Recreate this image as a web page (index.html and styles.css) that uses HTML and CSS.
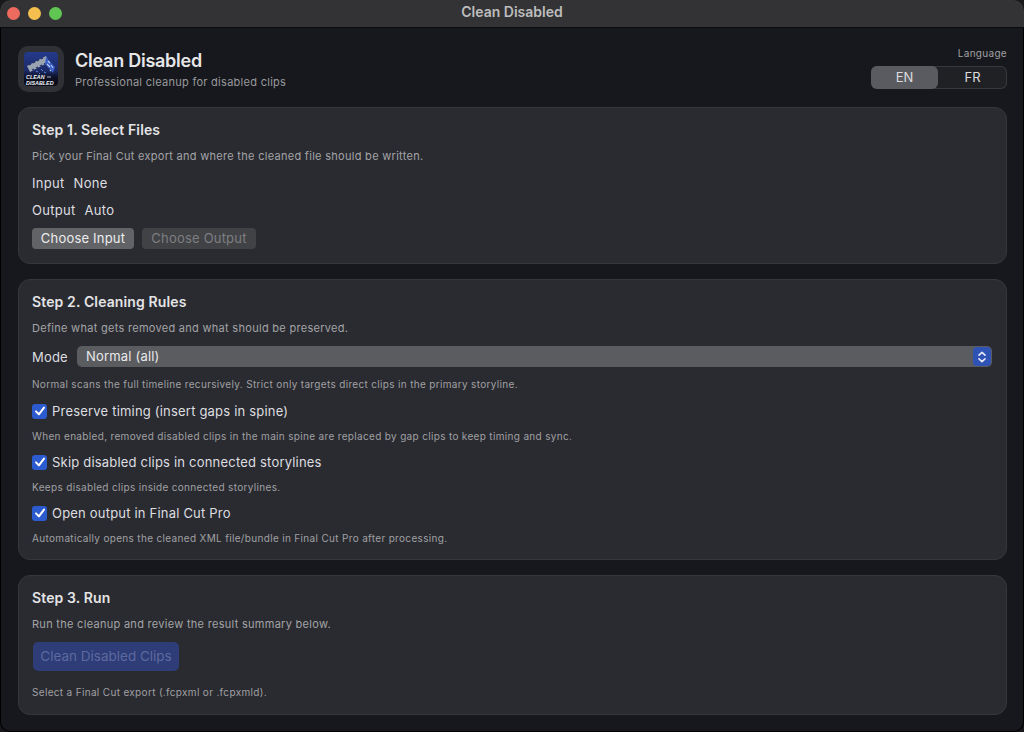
FILE: index.html
```html
<!DOCTYPE html>
<html lang="en">
<head>
<meta charset="utf-8">
<title>Clean Disabled</title>
<link rel="stylesheet" href="styles.css">
</head>
<body>
<div class="window">
  <div class="titlebar">
    <div class="lights"><span class="light red"></span><span class="light yellow"></span><span class="light green"></span></div>
    <div class="wintitle">Clean Disabled</div>
  </div>
  <main class="content">
    <header class="header">
      <div class="brand">
        <div class="appicon">
          <svg viewBox="0 0 34 34" width="34" height="34">
            <defs><linearGradient id="bg" x1="0" y1="0" x2="0" y2="1"><stop offset="0" stop-color="#243a8c"/><stop offset=".55" stop-color="#1c2a66"/><stop offset=".75" stop-color="#0d1024"/><stop offset="1" stop-color="#0a0c18"/></linearGradient></defs>
            <rect width="34" height="34" rx="4" fill="url(#bg)"/>
            <path d="M3 14 L22 4 L25 10 L6 20 Z" fill="#9aa3b2"/>
            <path d="M5 13l2-1M9 11l2-1M13 9l2-1M17 7l2-1M8 18l2-1M12 16l2-1M16 14l2-1M20 12l2-1" stroke="#26305c" stroke-width="1.2"/>
            <path d="M22 5 L31 15 L29 21 L21 12 Z" fill="#3a5fc6"/>
            <path d="M24 9l2 2M23 12l3 3M27 13l2 3M26 18l1 1" stroke="#b9c8ee" stroke-width="1.1"/>
            <path d="M12 19l2 1M17 17l2 2M15 21l1 1M20 20l2 1" stroke="#5f83dc" stroke-width="1"/>
            <text x="2" y="26.5" class="logotext">CLEAN</text>
            <text x="2" y="32.5" class="logotext">DISABLED</text>
            <path d="M23 25h4" stroke="#aab2c4" stroke-width="1.2"/>
          </svg>
        </div>
        <div class="brandtext">
          <h1 class="apptitle">Clean Disabled</h1>
          <p class="subtitle">Professional cleanup for disabled clips</p>
        </div>
      </div>
      <div class="lang">
        <div class="langlabel">Language</div>
        <div class="segment"><span class="seg active">EN</span><span class="seg">FR</span></div>
      </div>
    </header>

    <section class="card card1">
      <h2 class="cardtitle">Step 1. Select Files</h2>
      <p class="hint">Pick your Final Cut export and where the cleaned file should be written.</p>
      <div class="row"><span>Input</span><span>None</span></div>
      <div class="row"><span>Output</span><span>Auto</span></div>
      <div class="buttons">
        <button class="btn">Choose Input</button>
        <button class="btn off">Choose Output</button>
      </div>
    </section>

    <section class="card card2">
      <h2 class="cardtitle">Step 2. Cleaning Rules</h2>
      <p class="hint">Define what gets removed and what should be preserved.</p>
      <div class="moderow">
        <span>Mode</span>
        <div class="select">
          <span class="selval">Normal (all)</span>
          <span class="stepper"><svg viewBox="0 0 10 14" width="10" height="14"><path d="M2 5.2 5 2.4 8 5.2M2 8.8 5 11.6 8 8.8" fill="none" stroke="#e6ebf7" stroke-width="1.6" stroke-linecap="round" stroke-linejoin="round"/></svg></span>
        </div>
      </div>
      <p class="note">Normal scans the full timeline recursively. Strict only targets direct clips in the primary storyline.</p>
      <div class="check first"><span class="box"><svg viewBox="0 0 14 14" width="14" height="14"><path d="M3 7.4 5.9 10.4 11 3.6" fill="none" stroke="#fff" stroke-width="2" stroke-linecap="round" stroke-linejoin="round"/></svg></span>Preserve timing (insert gaps in spine)</div>
      <p class="note">When enabled, removed disabled clips in the main spine are replaced by gap clips to keep timing and sync.</p>
      <div class="check"><span class="box"><svg viewBox="0 0 14 14" width="14" height="14"><path d="M3 7.4 5.9 10.4 11 3.6" fill="none" stroke="#fff" stroke-width="2" stroke-linecap="round" stroke-linejoin="round"/></svg></span>Skip disabled clips in connected storylines</div>
      <p class="note">Keeps disabled clips inside connected storylines.</p>
      <div class="check"><span class="box"><svg viewBox="0 0 14 14" width="14" height="14"><path d="M3 7.4 5.9 10.4 11 3.6" fill="none" stroke="#fff" stroke-width="2" stroke-linecap="round" stroke-linejoin="round"/></svg></span>Open output in Final Cut Pro</div>
      <p class="note">Automatically opens the cleaned XML file/bundle in Final Cut Pro after processing.</p>
    </section>

    <section class="card card3">
      <h2 class="cardtitle">Step 3. Run</h2>
      <p class="hint">Run the cleanup and review the result summary below.</p>
      <button class="primary">Clean Disabled Clips</button>
      <p class="note status">Select a Final Cut export (.fcpxml or .fcpxmld).</p>
    </section>
  </main>
</div>
</body>
</html>
```
FILE: styles.css
```css
* { box-sizing: border-box; margin: 0; padding: 0; }
html, body { width: 1024px; height: 732px; overflow: hidden; background: #17181c; }
body { font-family: Inter, "Liberation Sans", sans-serif; color: #e2e2e4; }
.window { width: 1024px; height: 732px; border-radius: 10px; overflow: hidden; background: #17181d; box-shadow: inset 0 0 0 1px #000; display: flex; flex-direction: column; }
.titlebar { height: 28px; flex: none; background: #333335; border-bottom: 1px solid #0c0c0e; display: flex; align-items: center; position: relative; }
.lights { display: flex; gap: 8px; padding-left: 7px; padding-bottom: 1px; }
.light { width: 13px; height: 13px; border-radius: 50%; }
.red { background: #ec6a5e; }
.yellow { background: #f4bf4f; }
.green { background: #61c554; }
.wintitle { position: absolute; left: 0; right: 0; top: 0; height: 24px; line-height: 24px; text-align: center; font-size: 14px; font-weight: 600; color: #bdbdbe; }
.content { padding: 0 17px 0 18px; flex: 1; }
.header { height: 79px; display: flex; justify-content: space-between; }
.brand { display: flex; gap: 11px; padding-top: 18px; }
.appicon { width: 46px; height: 46px; border-radius: 10px; background: #303137; display: flex; align-items: center; justify-content: center; }
.logotext { font-family: "Liberation Sans", sans-serif; font-size: 5.4px; font-weight: 700; font-style: italic; fill: #eef0f5; }
.brandtext { padding-top: 4px; }
.apptitle { font-size: 18px; font-weight: 600; line-height: 22px; color: #e6e6e8; letter-spacing: -0.25px; }
.subtitle { font-size: 11px; line-height: 16px; margin-top: 2px; color: #98989c; letter-spacing: .28px; }
.lang { width: 136px; padding-top: 18px; display: flex; flex-direction: column; align-items: flex-end; }
.langlabel { font-size: 10px; line-height: 14px; color: #a0a0a4; letter-spacing: .3px; }
.segment { margin-top: 6px; width: 136px; height: 23px; display: flex; border-radius: 6px; background: #202125; box-shadow: inset 0 0 0 1px #37383c; }
.seg { flex: 1; text-align: center; font-size: 13px; line-height: 23px; color: #dcdcde; }
.seg.active { flex: none; width: 67px; background: #5a5b60; border-radius: 6px; }
.card { background: #2a2b30; border: 1px solid #36373c; border-radius: 12px; padding: 13px 14px 0 13px; margin-bottom: 15px; }
.card1 { height: 157px; }
.card2 { height: 281px; }
.card3 { height: 140px; margin-bottom: 0; }
.cardtitle { font-size: 14px; font-weight: 600; line-height: 17px; color: #e4e4e6; letter-spacing: .13px; }
.hint { font-size: 11px; line-height: 14px; margin-top: 11px; color: #a3a3a7; letter-spacing: .29px; }
.row { display: flex; gap: 9px; font-size: 13px; line-height: 16px; margin-top: 11px; color: #dedee0; letter-spacing: .3px; }
.hint + .row { margin-top: 12px; }
.buttons { display: flex; gap: 8px; margin-top: 10px; }
.btn { font-family: inherit; border: 0; height: 21px; width: 102px; padding-bottom: 2px; border-radius: 4px; background: #626367; color: #ececee; font-size: 13px; letter-spacing: .2px; }
.btn.off { width: 114px; background: #414246; color: #7d7e82; }
.moderow { display: flex; align-items: center; gap: 9px; margin-top: 11px; font-size: 13px; color: #dedee0; letter-spacing: .2px; }
.select { flex: 1; height: 21px; border-radius: 5px; background: #5b5c60; display: flex; align-items: center; justify-content: space-between; padding-left: 9px; }
.selval { font-size: 13px; color: #e8e8ea; padding-bottom: 2px; letter-spacing: .2px; }
.stepper { width: 18px; height: 19px; margin-right: 1px; border-radius: 4px; background: #2f52b5; display: flex; align-items: center; justify-content: center; }
.note { font-size: 10px; line-height: 13px; margin-top: 11px; color: #a0a0a4; letter-spacing: .33px; }
.check { display: flex; align-items: center; gap: 5px; font-size: 13px; line-height: 16px; margin-top: 11px; color: #dedee0; letter-spacing: .2px; }
.check.first { margin-top: 12px; }
.box { width: 15px; height: 15px; border-radius: 3px; background: #2c5bd0; display: flex; align-items: center; justify-content: center; }
.primary { display: block; font-family: inherit; border: 0; margin: 11px 0 0 1px; width: 146px; height: 29px; padding-bottom: 2px; border-radius: 5px; background: #2e3c77; color: #5c6a9f; font-size: 13.5px; }
.status { margin-top: 15px; }
```
